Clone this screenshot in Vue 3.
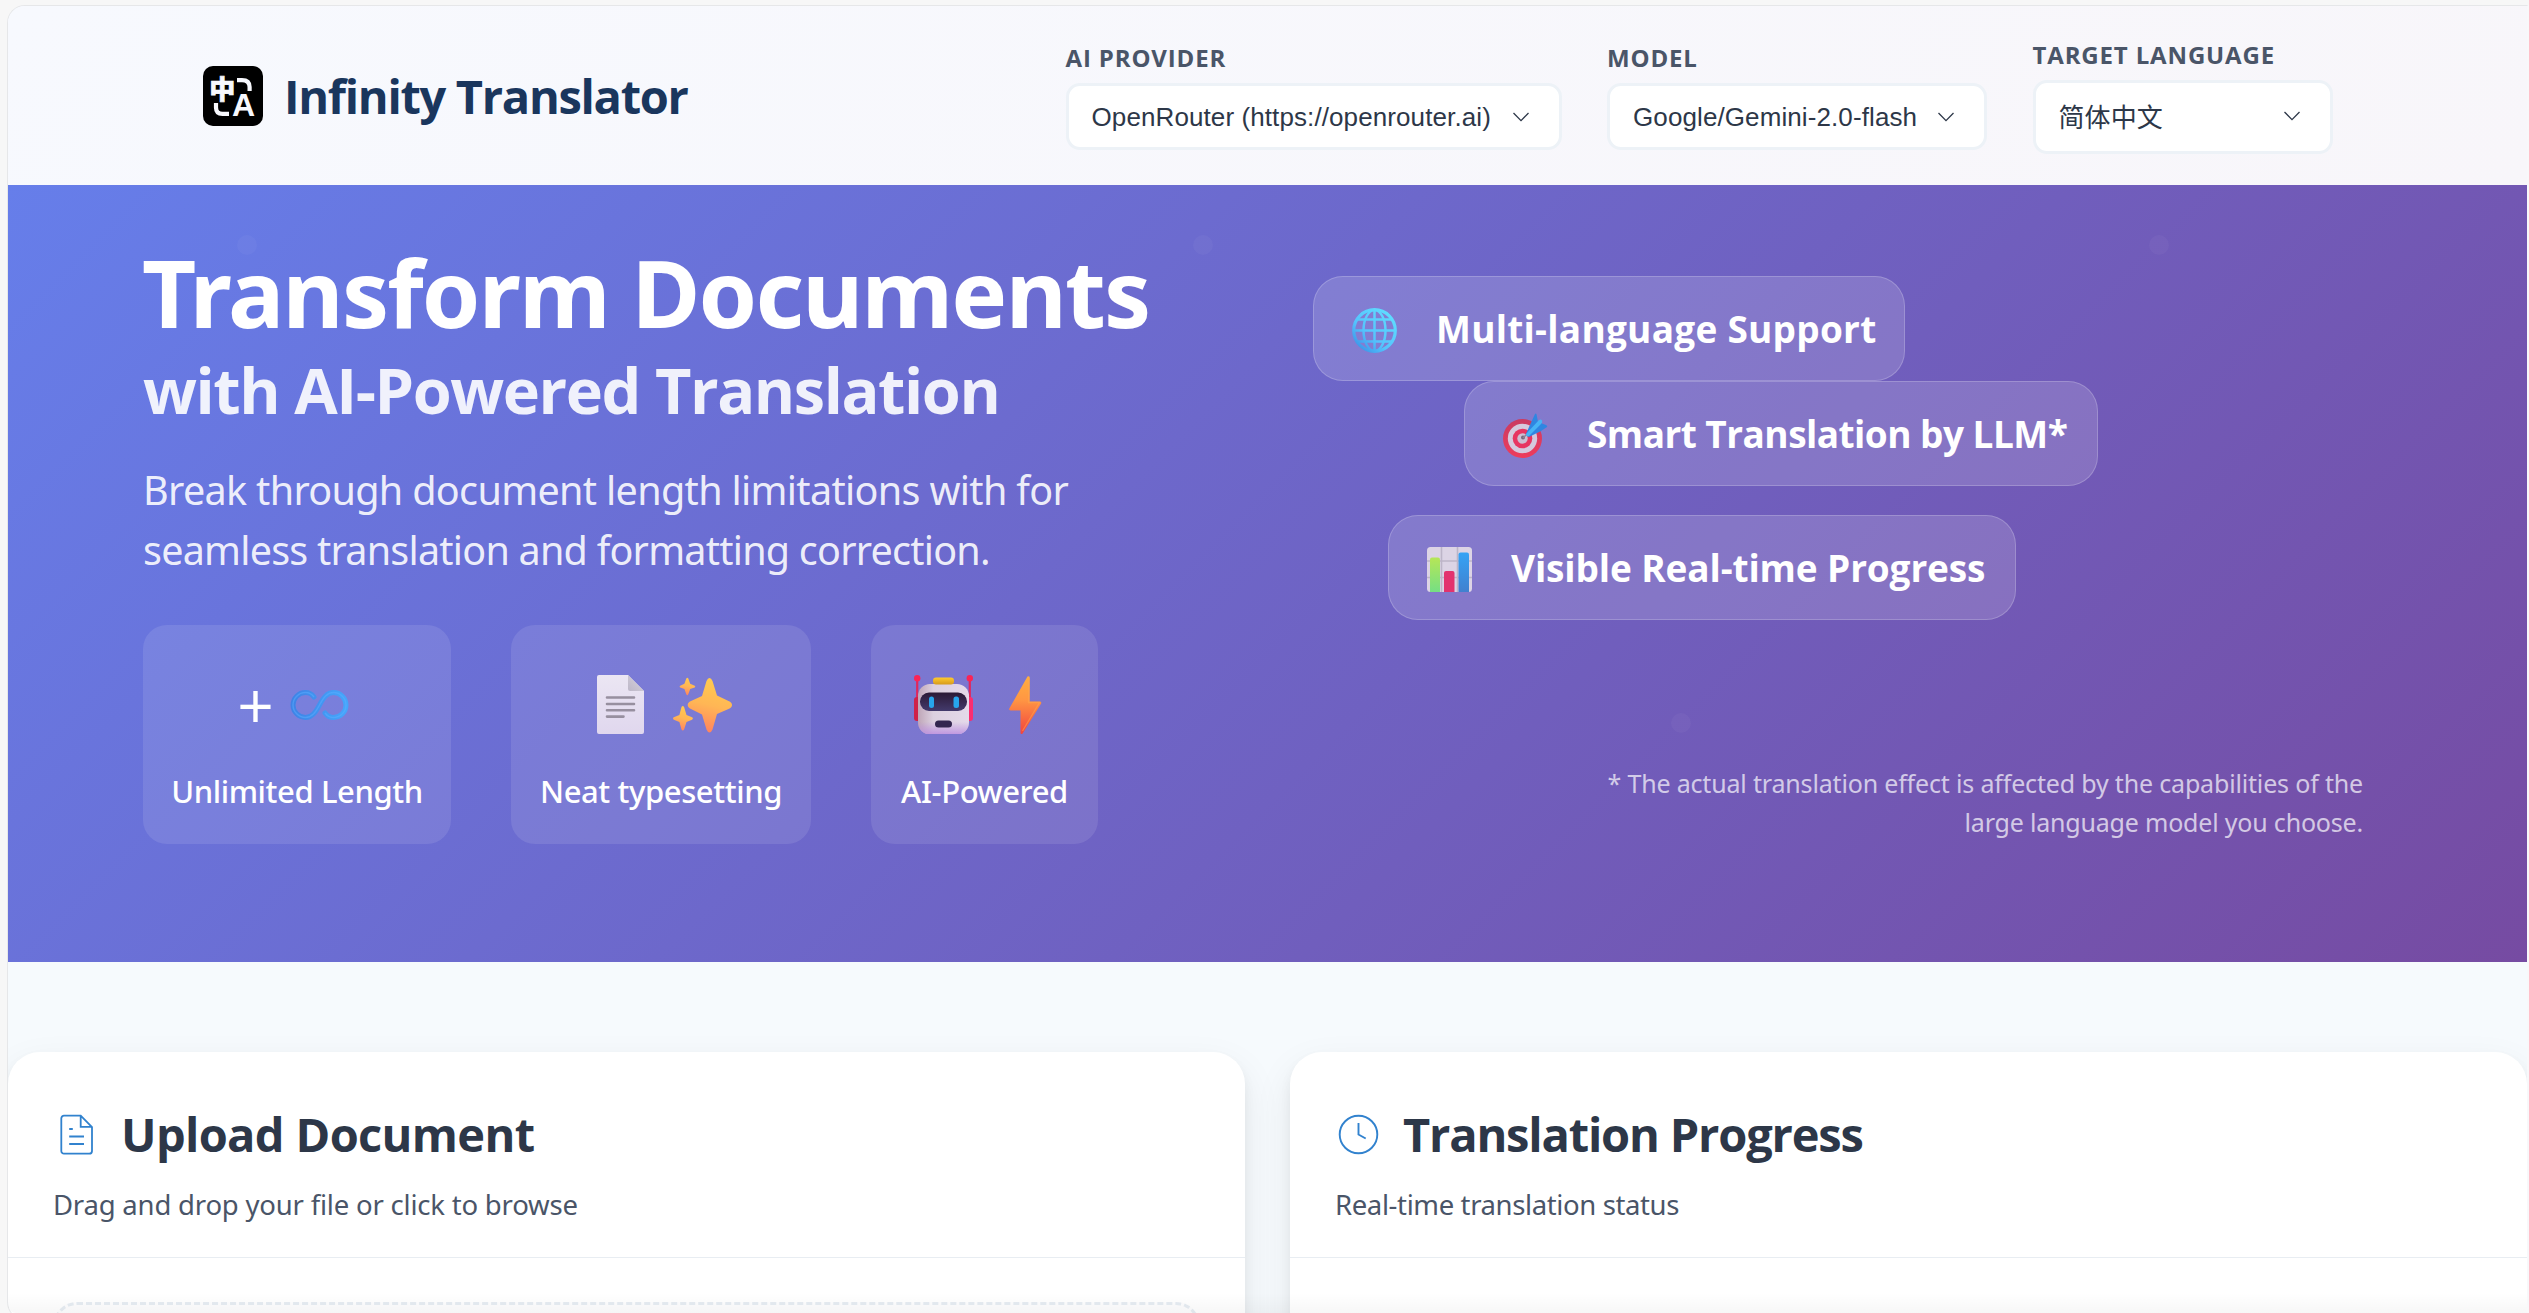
<script setup>
const selects = [
  { label: 'AI Provider', value: 'OpenRouter (https://openrouter.ai)', cls: 'provider' },
  { label: 'Model', value: 'Google/Gemini-2.0-flash', cls: 'model' },
  { label: 'Target Language', value: '简体中文', cls: 'language' },
]
const dots = [
  { x: 229, y: 50 },
  { x: 1185, y: 50 },
  { x: 2141, y: 50 },
  { x: 1663, y: 528 },
]
</script>

<template>
  <div class="page">
    <div class="window">
      <header class="topbar">
        <div class="brand">
          <svg class="logo" viewBox="0 0 60 60">
            <rect width="60" height="60" rx="10" fill="#000" />
            <text x="19.2" y="32.6" text-anchor="middle" class="logo-han">中</text>
            <text x="40.6" y="50" text-anchor="middle" class="logo-latin">A</text>
            <g fill="none" stroke="#f7f8fd" stroke-width="4.2">
              <path d="M34 14.1h5q7.6 0 7.6 7v4" />
              <path d="M13 37v4.5q0 6.4 6.5 6.4H26" />
            </g>
          </svg>
          <span class="name">Infinity Translator</span>
        </div>
        <div class="controls">
          <div v-for="s in selects" :key="s.label" class="control" :class="s.cls">
            <label>{{ s.label }}</label>
            <div class="select">
              <span>{{ s.value }}</span>
              <svg width="18" height="12" viewBox="0 0 18 12"><path d="M1.5 2 9 9.6 16.5 2" fill="none" stroke="#2d3748" stroke-width="1.3" /></svg>
            </div>
          </div>
        </div>
      </header>

      <section class="hero">
        <i v-for="(d, n) in dots" :key="n" class="dot" :style="{ left: d.x + 'px', top: d.y + 'px' }"></i>
        <div class="intro">
          <h1>Transform Documents</h1>
          <h2>with AI-Powered Translation</h2>
          <p class="lead">
            <span class="l1">Break through document length limitations with for</span><br />
            <span class="l2">seamless translation and formatting correction.</span>
          </p>
          <div class="stats">
            <div class="stat s1">
              <div class="icons">
                <span class="plus">+</span>
                <svg class="emoji" viewBox="0 0 59 59">
                  <defs><linearGradient id="inf" x1="0" x2="1"><stop offset="0" stop-color="#3f83e6" /><stop offset="1" stop-color="#45a5fb" /></linearGradient></defs>
                  <path d="M24 22C21.500 18.500 18.500 17.500 15.500 17.500a12.500 12.500 0 0 0 0 25c6.500 0 10-5 14-12.500s7.500-12.500 14-12.500a12.500 12.500 0 0 1 0 25c-3 0-6-1-8.500-4.500" fill="none" stroke="url(#inf)" stroke-width="5" stroke-linecap="round" />
                  <path d="M24 22C21.500 18.500 18.500 17.500 15.500 17.500a12.500 12.500 0 0 0 0 25c6.500 0 10-5 14-12.500s7.500-12.500 14-12.500a12.500 12.500 0 0 1 0 25c-3 0-6-1-8.500-4.500" fill="none" stroke="#5ab0ff" stroke-opacity=".5" stroke-width="1.500" />
                </svg>
              </div>
              <span class="caption">Unlimited Length</span>
            </div>
            <div class="stat s2">
              <div class="icons">
                <svg class="emoji" viewBox="0 0 59 59">
                  <defs>
                    <linearGradient id="pg" x1="0" y1="0" x2="0" y2="1"><stop offset="0" stop-color="#ebe6f3" /><stop offset="1" stop-color="#e0d7ee" /></linearGradient>
                    <linearGradient id="fold" x1="1" y1="0" x2="0" y2="1"><stop offset="0" stop-color="#d9d5df" /><stop offset="1" stop-color="#bdb7c8" /></linearGradient>
                  </defs>
                  <path d="M8 0h29l16 16v41a2 2 0 0 1-2 2H8a2 2 0 0 1-2-2V2a2 2 0 0 1 2-2z" fill="url(#pg)" />
                  <path d="M37 0l16 16H39a2 2 0 0 1-2-2z" fill="url(#fold)" />
                  <path d="M16 22.500h27M16 29h27M16 35.300h27M16 41.600h16.500" stroke="#978f9f" stroke-width="2.600" stroke-linecap="round" />
                </svg>
                <svg class="emoji" viewBox="0 0 59 59">
                  <defs><linearGradient id="sp" x1="0.600" y1="0" x2="0.400" y2="1"><stop offset="0" stop-color="#ffcb4f" /><stop offset=".5" stop-color="#ffb655" /><stop offset="1" stop-color="#ff825f" /></linearGradient></defs>
                  <path fill="url(#sp)" d="M33.500 6q1.300-3 3-3t3 3l4.500 14.500 11.500 5.500q3.500 1.500 3.500 4t-3.500 4l-11.500 5-4.500 15.500q-1.300 3-3 3t-3-3L29 39.500 18 34q-3.300-1.500-3.300-4t3.300-4l11-5z" />
                  <path fill="url(#sp)" d="M13.300 3.500q1-1.700 2 0l1.900 5.300 4.500 1.900q1.300.9 0 1.700l-4.500 1.700-1.900 5.200q-1 1.700-2 0L11.400 14 7.200 12.400q-1.300-.8 0-1.700l4.200-1.900z" />
                  <path fill="url(#sp)" d="M8.500 32q1.300-2 2.600 0l2.400 8 5.500 2.300q1.800 1.200 0 2.400L13.500 47l-2.400 7.600q-1.300 2-2.600 0L6.400 47 .8 44.700q-1.600-1.200 0-2.400L6.400 40z" />
                </svg>
              </div>
              <span class="caption">Neat typesetting</span>
            </div>
            <div class="stat s3">
              <div class="icons">
                <svg class="emoji" viewBox="0 0 59 59">
                  <defs>
                    <linearGradient id="hd" x1="0" x2="1"><stop offset="0" stop-color="#bfa6b8" /><stop offset=".3" stop-color="#dcd0df" /><stop offset="1" stop-color="#e4d9ea" /></linearGradient>
                    <linearGradient id="hb" x1="0" y1="0" x2="0" y2="1"><stop offset=".75" stop-color="#b98be0" stop-opacity="0" /><stop offset="1" stop-color="#b98be0" stop-opacity=".85" /></linearGradient>
                    <linearGradient id="vs" x1="0" y1="0" x2="0" y2="1"><stop offset="0" stop-color="#2b1935" /><stop offset="1" stop-color="#433a6c" /></linearGradient>
                    <linearGradient id="cap" x1="0" y1="0" x2="0" y2="1"><stop offset="0" stop-color="#ffcb2e" /><stop offset="1" stop-color="#d69a1c" /></linearGradient>
                  </defs>
                  <path d="M3.200 4v22M55.800 4v22" stroke="#e0275c" stroke-width="2.200" />
                  <circle cx="3.200" cy="3.300" r="3.200" fill="#fa2456" /><circle cx="55.800" cy="3.300" r="3.200" fill="#fa2456" />
                  <rect x="0" y="22" width="8" height="24" rx="3" fill="#cf2149" /><rect x="51" y="22" width="8" height="24" rx="3" fill="#fb2d70" />
                  <rect x="4" y="9" width="51" height="50.500" rx="12" fill="url(#hd)" /><rect x="4" y="9" width="51" height="50.500" rx="12" fill="url(#hb)" />
                  <rect x="19" y="2.500" width="21" height="7" rx="3" fill="url(#cap)" />
                  <rect x="6" y="17.500" width="47" height="18.500" rx="9" fill="url(#vs)" />
                  <rect x="15" y="21.500" width="5" height="11.500" rx="2.500" fill="#27a5ec" /><rect x="39.500" y="21.500" width="5.500" height="11.500" rx="2.500" fill="#27a5ec" />
                  <rect x="21" y="45.500" width="17" height="7" rx="3.500" fill="#33274f" />
                </svg>
                <svg class="emoji" viewBox="0 0 59 59">
                  <defs><linearGradient id="bt" x1="0" y1="0" x2="0" y2="1"><stop offset="0" stop-color="#ffae3f" /><stop offset=".4" stop-color="#ff9743" /><stop offset="1" stop-color="#f1433f" /></linearGradient></defs>
                  <path fill="url(#bt)" d="M31.500 1.500Q33.800.3 33.800 3v23.500H44q2 .3 1 2.300L26.700 58.500q-1.900 1.600-2.200-.7V35.500h-10q-2.100-.4-1.200-2z" />
                  <path d="M32.500 4v23.500h11L26.500 56" fill="none" stroke="#ffa84c" stroke-opacity=".5" stroke-width="1.300" />
                </svg>
              </div>
              <span class="caption">AI-Powered</span>
            </div>
          </div>
        </div>

        <div class="visual">
          <div class="feature f1">
            <svg class="ficon" viewBox="0 0 45 45">
              <defs><linearGradient id="gl" gradientUnits="userSpaceOnUse" x1="38" y1="5" x2="5" y2="42"><stop offset="0" stop-color="#5fdcff" /><stop offset=".6" stop-color="#55c4fd" /><stop offset="1" stop-color="#3a8fe6" /></linearGradient></defs>
              <g fill="none" stroke="url(#gl)" stroke-width="2.500">
                <circle cx="22.500" cy="22.500" r="20.800" stroke-width="3.200" />
                <ellipse cx="22.500" cy="22.500" rx="11" ry="20.500" />
                <path d="M22.500 2V43M2 22.500H43M5 11.500H40M5 33.500H40" />
              </g>
            </svg>
            <span>Multi-language Support</span>
          </div>
          <div class="feature f2">
            <svg class="ficon" viewBox="0 0 45 45">
              <defs><linearGradient id="tg" x1="0" y1="0" x2="0" y2="1"><stop offset="0" stop-color="#c93b62" /><stop offset="1" stop-color="#ee3c5c" /></linearGradient></defs>
              <circle cx="19.500" cy="25.500" r="19.500" fill="url(#tg)" />
              <circle cx="19.500" cy="25.500" r="14.700" fill="#d5c9dd" /><circle cx="19.500" cy="25.500" r="9.800" fill="#e73561" />
              <circle cx="19.500" cy="25.500" r="5.200" fill="#cdbfd2" /><circle cx="20" cy="24.500" r="2" fill="#75677b" />
              <path d="M20 25 30 15" stroke="#8c8295" stroke-width="1.500" />
              <path d="M26 14 32 1q1-1 1.500.3L35 9l8 3q2 1 1 2l-6 4q-6 3-12 6-3-1-3-3z" fill="#2f86e2" />
              <path d="M23 21 36 7q2-1 3 .5T38 11L26 23q-3 1.500-3-2z" fill="#47b4f5" />
            </svg>
            <span>Smart Translation by LLM*</span>
          </div>
          <div class="feature f3">
            <svg class="ficon" viewBox="0 0 45 45">
              <defs>
                <linearGradient id="g1" x1="0" y1="0" x2="0" y2="1"><stop offset="0" stop-color="#b6e657" /><stop offset="1" stop-color="#75df84" /></linearGradient>
                <linearGradient id="g3" x1="0" y1="0" x2="0" y2="1"><stop offset="0" stop-color="#35a3f5" /><stop offset="1" stop-color="#4180cf" /></linearGradient>
              </defs>
              <rect width="45" height="45" rx="3.500" fill="#dcd4e5" />
              <path d="M0 14h45M0 30.500h45M14.500 0v45M30.500 0v45" stroke="#bdb5c8" stroke-width="1.600" />
              <path d="M3 45V12.500q0-2 2-2h6q2 0 2 2V45z" fill="url(#g1)" />
              <path d="M17 45V26q0-2 2-2h6.500q2 0 2 2V45z" fill="#e2336e" />
              <path d="M31.500 45V7.500q0-2 2-2H40q2 0 2 2V45z" fill="url(#g3)" />
            </svg>
            <span>Visible Real-time Progress</span>
          </div>
          <p class="note">
            <span class="n1">* The actual translation effect is affected by the capabilities of the</span><br />
            <span class="n2">large language model you choose.</span>
          </p>
        </div>
      </section>

      <main class="work">
        <section class="card">
          <div class="head">
            <div class="title">
              <svg width="47" height="47" viewBox="0 0 47 47" fill="none" stroke="#3182ce" stroke-width="1.800">
                <path d="M27.700 4.700H11a2.700 2.700 0 0 0-2.700 2.700v32.500a2.700 2.700 0 0 0 2.700 2.700h25.300a2.700 2.700 0 0 0 2.700-2.700V16zV15.800H39" />
                <path d="M16.200 25.500H31M16.200 33H31M16.200 18h3.600" />
              </svg>
              <h3 class="t1">Upload Document</h3>
            </div>
            <p class="p1">Drag and drop your file or click to browse</p>
          </div>
          <div class="body"><div class="dropzone"></div></div>
        </section>
        <section class="card">
          <div class="head">
            <div class="title">
              <svg width="47" height="47" viewBox="0 0 47 47" fill="none" stroke="#3182ce" stroke-width="1.900">
                <circle cx="23.500" cy="23.500" r="18.800" />
                <path d="M23.500 12v11.500l7.200 4" />
              </svg>
              <h3 class="t2">Translation Progress</h3>
            </div>
            <p class="p2">Real-time translation status</p>
          </div>
        </section>
      </main>
    </div>
    <div class="fade"></div>
  </div>
</template>

<style>
body { margin: 0; background: #f7f7f7; }
</style>

<style scoped>
* { box-sizing: border-box; }
h1, h2, h3, p { margin: 0; }
svg { display: block; flex: none; }
.page {
  position: relative;
  width: 2529px;
  height: 1313px;
  padding: 5px 0 0 7px;
  overflow: hidden;
  background: #f7f7f7;
  font-family: "Noto Sans", "Open Sans", "Noto Sans CJK SC", sans-serif;
  white-space: nowrap;
}
.window {
  width: 2522px;
  height: 1315px;
  border: 1px solid #e6e7e9;
  border-right: 2px solid #f8f8fa;
  border-radius: 18px 0 0 18px;
  overflow: hidden;
  background: #f6fafd;
}
.topbar {
  display: flex;
  align-items: center;
  justify-content: space-between;
  height: 179px;
  padding: 0 194.5px 0 195px;
  background: linear-gradient(135deg, #f7f9fe, #f8f6fa);
}
.brand { display: flex; align-items: center; gap: 21px; }
.logo { width: 60px; height: 60px; }
.logo-han { font: 900 26px "Noto Sans CJK SC", sans-serif; fill: #f7f8fd; stroke: #f7f8fd; stroke-width: .7px; }
.logo-latin { font: 700 32px "Liberation Sans", sans-serif; fill: #f7f8fd; }
.name { font-family: "Open Sans", sans-serif; font-size: 47px; line-height: 66px; font-weight: 700; letter-spacing: -1.3px; color: #1a365d; }
.controls { display: flex; align-items: center; gap: 45.5px; }
.control { display: flex; flex-direction: column; gap: 9px; }
.control label {
  font-family: "Open Sans", sans-serif;
  font-size: 24px;
  line-height: 33px;
  font-weight: 700;
  letter-spacing: .85px;
  text-transform: uppercase;
  color: #4a5568;
}
.select {
  display: flex;
  align-items: center;
  justify-content: space-between;
  height: 67px;
  padding: 0 29px 0 23px;
  border: 3px solid #edf2f7;
  border-radius: 14px;
  background: #fff;
  color: #2d3748;
  font: 26px/40px "Liberation Sans", "Noto Sans CJK SC", sans-serif;
  letter-spacing: .1px;
}
.provider { width: 496px; }
.model { width: 380px; }
.language { width: 300px; }
.language .select { height: 74px; }
.language .select span { padding-top: 3px; }
.language .select svg { margin-top: -1px; }

.hero {
  position: relative;
  display: flex;
  justify-content: space-between;
  height: 777px;
  padding: 54px 164px 0 135px;
  background: linear-gradient(135deg, #667eea 0%, #764ba2 100%);
  color: #fff;
}
.dot {
  position: absolute;
  width: 20px;
  height: 20px;
  border-radius: 50%;
  background: rgba(255, 255, 255, .035);
}
.intro { position: relative; }
h1 { margin-left: -1px; font-size: 94px; line-height: 107px; font-weight: 700; letter-spacing: -1.8px; }
h2 { margin-top: 9px; font-family: "Open Sans", sans-serif; font-size: 63px; line-height: 70px; font-weight: 700; letter-spacing: -1.42px; color: rgba(255, 255, 255, .9); }
.lead { margin-top: 35px; font-size: 39.5px; line-height: 60px; color: rgba(255, 255, 255, .9); }
.l1 { letter-spacing: -.66px; }
.l2 { letter-spacing: -.76px; }
.stats { display: flex; gap: 60px; margin-top: 45px; }
.stat {
  display: flex;
  flex-direction: column;
  align-items: center;
  height: 219px;
  padding-top: 30px;
  border-radius: 24px;
  background: rgba(255, 255, 255, .1);
}
.s1 { width: 308px; }
.s2 { width: 300px; }
.s3 { width: 227px; }
.icons { display: flex; align-items: center; gap: 23px; height: 99px; }
.s1 .icons { gap: 19px; padding-right: 5px; }
.emoji { width: 59px; height: 59px; }
.plus { display: flex; justify-content: center; width: 31px; font-family: "Open Sans", sans-serif; font-size: 64px; line-height: 80px; }
.caption { margin-top: 15px; font-size: 31px; line-height: 44px; font-weight: 500; letter-spacing: -.4px; }

.visual { display: flex; flex-direction: column; width: 1050px; padding-top: 37px; }
.feature {
  display: flex;
  align-items: center;
  gap: 39px;
  height: 104.5px;
  padding-left: 38px;
  border: 1px solid rgba(255, 255, 255, .2);
  border-radius: 30px;
  background: rgba(255, 255, 255, .15);
  font-family: "Open Sans", sans-serif;
  font-size: 37px;
  font-weight: 700;
}
.ficon { width: 45px; height: 45px; margin-top: 4px; }
.f1 { width: 592px; letter-spacing: .25px; }
.f2 { width: 634px; margin: .5px 0 0 151px; letter-spacing: -.53px; }
.f3 { width: 628px; margin: 29.5px 0 0 75px; letter-spacing: -.12px; }
.note { margin-top: 144px; text-align: right; font-size: 25px; line-height: 39px; color: rgba(255, 255, 255, .7); }
.n1 { letter-spacing: -.17px; }
.n2 { letter-spacing: -.19px; }

.work { display: flex; gap: 45px; padding-top: 90px; }
.card {
  width: 1237px;
  height: 420px;
  border-radius: 32px;
  background: #fff;
  box-shadow: 0 15px 38px rgba(0, 0, 0, .08), 0 6px 12px rgba(0, 0, 0, .05);
}
.head { padding: 48px 45px 31px; border-bottom: 1px solid #e8edf2; }
.title { display: flex; align-items: center; gap: 21px; height: 66px; }
.title svg { margin-top: 2px; }
h3 { padding-top: 2px; font-family: "Open Sans", sans-serif; font-size: 47px; line-height: 66px; font-weight: 700; color: #2d3748; }
.t1 { letter-spacing: -.65px; }
.t2 { letter-spacing: -1.18px; }
.head p { margin-top: 18px; font-size: 27.5px; line-height: 42px; color: #4a5568; }
.p1 { letter-spacing: -.2px; }
.p2 { letter-spacing: -.38px; }
.body { padding: 44px 45px; }
.dropzone { height: 300px; border: 3px dashed #e6ecf2; border-radius: 24px; background: #fdfdfe; }
.fade {
  position: absolute;
  left: 8px;
  right: 2px;
  bottom: 0;
  height: 20px;
  border-bottom-left-radius: 8px;
  background: linear-gradient(to bottom, rgba(0, 0, 0, 0), rgba(0, 0, 0, .03));
}
</style>
